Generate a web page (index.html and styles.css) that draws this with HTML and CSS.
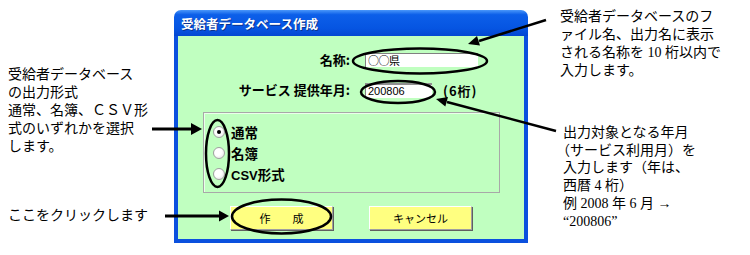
FILE: index.html
```html
<!DOCTYPE html>
<html lang="ja">
<head>
    <meta charset="UTF-8">
    <title>受給者データベース作成</title>
    <link rel="stylesheet" href="styles.css">
</head>
<body>

    <div class="page">

        <div class="notes-left">
            <p class="note note-format">受給者データベース<br>の出力形式<br>通常、名簿、ＣＳＶ形<br>式のいずれかを選択<br>します。</p>
            <p class="note note-click">ここをクリックします</p>
        </div>

        <div class="dialog">
            <div class="titlebar">受給者データベース作成</div>
            <div class="dialog-body">
                <div class="field-row">
                    <span class="field-label">名称:</span>
                    <span class="textbox textbox-name">○○県</span>
                </div>
                <div class="field-row">
                    <span class="field-label">サービス 提供年月:</span>
                    <span class="textbox textbox-date">200806</span>
                    <span class="field-hint">(6桁)</span>
                </div>

                <div class="groupbox">
                    <div class="radio"><span class="radio-mark"><span class="radio-dot"></span></span><span>通常</span></div>
                    <div class="radio"><span class="radio-mark"></span><span>名簿</span></div>
                    <div class="radio"><span class="radio-mark"></span><span><span class="latin">CSV</span>形式</span></div>
                </div>

                <div class="buttons">
                    <span class="btn">作　　成</span>
                    <span class="btn">キャンセル</span>
                </div>
            </div>
        </div>

        <div class="notes-right">
            <p class="note note-name">受給者データベースのフ<br>ァイル名、出力名に表示<br>される名称を 10 桁以内で<br>入力します。</p>
            <p class="note note-month">出力対象となる年月<br><span class="half">（</span>サービス利用月）を<br>入力します（年は、<br>西暦 4 桁）<br>例 2008 年 6 月 →<br>“200806”</p>
        </div>

        <!-- callout marks drawn over the dialog -->
        <svg class="marks" width="750" height="255" viewBox="0 0 750 255">
            <g fill="none" stroke="#000" stroke-width="2.5">
                <ellipse cx="420" cy="61" rx="67" ry="12.5"/>
                <ellipse cx="398" cy="92" rx="37" ry="11"/>
                <ellipse cx="217.5" cy="153.5" rx="11.5" ry="33.5"/>
                <ellipse cx="281.5" cy="216.5" rx="49.5" ry="17"/>
                <line x1="546" y1="20" x2="479" y2="41"/>
                <line x1="556" y1="131" x2="447" y2="102"/>
            </g>
            <g stroke="#000" stroke-width="3">
                <line x1="152" y1="129" x2="192" y2="129"/>
                <line x1="165" y1="216" x2="221" y2="216"/>
            </g>
            <g fill="#000">
                <polygon points="468,44 480,45.6 477,36"/>
                <polygon points="436,99 448,97 445.3,106.6"/>
                <polygon points="202,129 191,123 191,135"/>
                <polygon points="229,216 219,210.5 219,221.5"/>
            </g>
        </svg>

    </div>

</body>
</html>
```

FILE: styles.css
```css
body {
    margin: 0;
    background-color: #fff;
    font-family: "Liberation Serif", "Noto Sans CJK JP", serif;
    color: #000;
}

.page {
    position: relative;
    display: flex;
    width: 750px;
    height: 255px;
    overflow: hidden;
}

/* annotation text */
.note {
    margin: 0;
    font-size: 14px;
    line-height: 18px;
    white-space: nowrap;
}

.notes-left {
    flex: 0 0 174px;
    box-sizing: border-box;
    padding-left: 8px;
    display: flex;
    flex-direction: column;
}

.note-format {
    margin-top: 66px;
}

.note-click {
    margin-top: 51px;
}

.notes-right {
    padding-left: 32px;
    display: flex;
    flex-direction: column;
}

.note-name {
    margin-top: 8px;
}

.note-month {
    margin-top: 44px;
    padding-left: 3px;
    line-height: 17.7px;
}

.note .half {
    font-feature-settings: "halt";
}

/* the dialog window */
.dialog {
    flex: 0 0 354px;
    margin-top: 10px;
    height: 233px;
    display: flex;
    flex-direction: column;
}

.titlebar {
    height: 26px;
    flex: none;
    border-radius: 7px 7px 0 0;
    background: linear-gradient(#4a97fa, #0c5fe9 18%, #0655e2 70%, #0347d2);
    color: #fff;
    font: bold 12.5px "Noto Sans CJK JP", sans-serif;
    padding-left: 7px;
    display: flex;
    align-items: center;
    text-shadow: 1px 1px 0 #0a3390;
}

.dialog-body {
    flex: 1;
    background-color: #c0ffc0;
    border: 4px solid #0b50de;
    border-top: none;
    padding-top: 16px;
}

.field-row {
    display: flex;
    align-items: center;
    height: 16px;
}

.field-row + .field-row {
    margin-top: 14px;
}

.field-label {
    width: 172px;
    text-align: right;
    font: bold 13px "Noto Sans CJK JP", sans-serif;
    line-height: 16px;
}

.textbox {
    margin-left: 15px;
    box-sizing: border-box;
    height: 14px;
    padding-left: 2px;
    background-color: #fff;
    border-top: 1px solid #808080;
    border-left: 1px solid #808080;
    font: 11px "Liberation Sans", "Noto Sans CJK JP", sans-serif;
    line-height: 13px;
}

.textbox-name {
    width: 113px;
    font-family: "Noto Sans CJK JP", sans-serif;
    letter-spacing: -0.5px;
}

.textbox-date {
    width: 67px;
    height: 15px;
    border-top: 2px solid #909090;
}

.field-hint {
    margin-left: 11px;
    font: bold 13px "Noto Sans CJK JP", sans-serif;
    letter-spacing: 1px;
}

.groupbox {
    margin: 14px 0 0 25px;
    width: 297px;
    height: 81px;
    box-sizing: border-box;
    border: 1px solid #a8a8a8;
    box-shadow: inset 1px 1px 0 #eaffea;
    padding: 8px 0 0 9px;
}

.radio {
    display: flex;
    align-items: center;
    gap: 6px;
    height: 21px;
    font: bold 13.5px "Noto Sans CJK JP", sans-serif;
}

.radio .latin {
    font-family: "Liberation Sans", sans-serif;
    font-size: 13px;
}

.radio-mark {
    width: 12px;
    height: 12px;
    box-sizing: border-box;
    border-radius: 50%;
    border: 1px solid #a0a0a0;
    background: radial-gradient(circle at 40% 40%, #fff 40%, #dcdcdc);
    display: grid;
    place-items: center;
}

.radio-dot {
    width: 4px;
    height: 4px;
    border-radius: 50%;
    background-color: #000;
}

.buttons {
    display: flex;
    gap: 36px;
    margin: 13px 0 0 52px;
}

.btn {
    width: 103px;
    height: 24px;
    box-sizing: border-box;
    background-color: #ffff80;
    border: 1px solid;
    border-color: #fff #a0a0a0 #a0a0a0 #fff;
    box-shadow: 1px 1px 0 #606060;
    font: 11px "Noto Sans CJK JP", sans-serif;
    display: flex;
    align-items: center;
    justify-content: center;
}

.marks {
    position: absolute;
    left: 0;
    top: 0;
    pointer-events: none;
}
```
